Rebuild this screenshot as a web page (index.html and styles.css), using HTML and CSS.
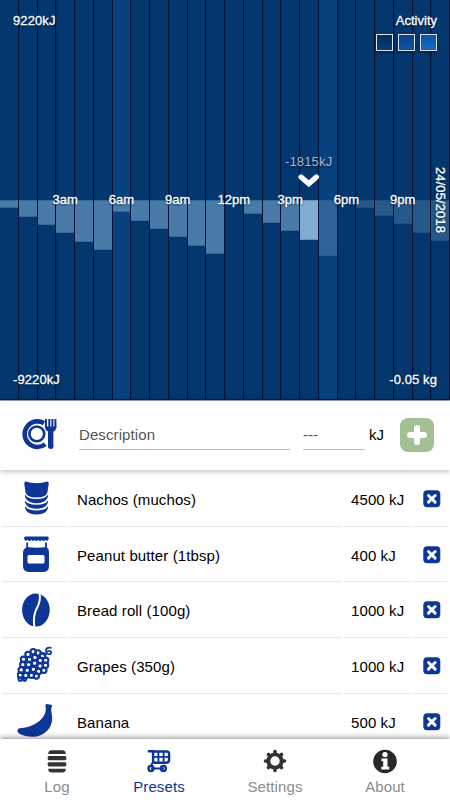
FILE: index.html
```html
<!DOCTYPE html>
<html lang="en">
<head>
<meta charset="utf-8">
<title>Energy presets</title>
<link rel="stylesheet" href="styles.css">
</head>
<body>
<svg class="defs" width="0" height="0" aria-hidden="true">
  <symbol id="remove" viewBox="0 0 18 18"><rect x=".3" y=".3" width="17" height="17" rx="4" fill="#0d3697"/><path d="M5.5 5.5l6.6 6.6M12.1 5.5l-6.6 6.6" stroke="#fff" stroke-width="2.9" stroke-linecap="round"/></symbol>
</svg>
<main class="app">
  <section class="chart">
    <div class="hours">
      <div class="hour"><i style="height:8px"></i></div>
      <div class="hour"><i style="height:17px"></i></div>
      <div class="hour"><i style="height:25px"></i></div>
      <div class="hour"><i style="height:33px"></i></div>
      <div class="hour"><i style="height:42px"></i></div>
      <div class="hour"><i style="height:50px"></i></div>
      <div class="hour active"><i style="height:12px"></i></div>
      <div class="hour"><i style="height:21px"></i></div>
      <div class="hour"><i style="height:29px"></i></div>
      <div class="hour"><i style="height:37px"></i></div>
      <div class="hour"><i style="height:46px"></i></div>
      <div class="hour"><i style="height:54px"></i></div>
      <div class="hour"></div>
      <div class="hour"><i style="height:14px"></i></div>
      <div class="hour"><i style="height:23px"></i></div>
      <div class="hour"><i style="height:31px"></i></div>
      <div class="hour now"><i style="height:40px"></i></div>
      <div class="hour active future"><i style="height:56px"></i></div>
      <div class="hour"></div>
      <div class="hour future"><i style="height:8px"></i></div>
      <div class="hour future"><i style="height:16px"></i></div>
      <div class="hour future"><i style="height:24px"></i></div>
      <div class="hour future"><i style="height:33px"></i></div>
      <div class="hour future"><i style="height:41px"></i></div>
    </div>
    <span class="label max">9220kJ</span>
    <div class="label activity"><span>Activity</span>
      <div class="levels"><b class="low"></b><b class="mid"></b><b class="high"></b></div>
    </div>
    <span class="label balance">-1815kJ</span>
    <svg class="marker" width="24" height="18" viewBox="0 0 24 18"><path d="M4 5l7.8 6.8L19.4 5" fill="none" stroke="#fff" stroke-width="5.2" stroke-linecap="round"/></svg>
    <div class="times"><span>3am</span><span>6am</span><span>9am</span><span>12pm</span><span>3pm</span><span>6pm</span><span>9pm</span></div>
    <span class="label date">24/05/2018</span>
    <span class="label min">-9220kJ</span>
    <span class="label weight">-0.05 kg</span>
  </section>

  <section class="entry">
    <svg class="plate" width="36" height="34" viewBox="0 0 36 34" fill="none" stroke="#0d3697"><path d="M23 5.2A12.8 12.8 0 1 0 24.3 26.3" stroke-width="4.6"/><circle cx="15.8" cy="15.9" r="7.4" stroke-width="2.6"/><path d="M25 1v9M28.3 1v9M31.4 1v9M34.4 1v9" stroke-width="2"/><path d="M24 8.5H35.4Q35.3 12.5 32.4 13.6V29Q32.4 31 29.8 31T27 29V13.6Q24 12.5 24 8.5z" fill="#0d3697" stroke="none"/></svg>
    <span class="field description">Description</span>
    <span class="field amount">---</span>
    <span class="unit">kJ</span>
    <button class="add" aria-label="Add"><svg width="34" height="34" viewBox="0 0 34 34"><path d="M17 10v14M10 17h14" stroke="#fff" stroke-width="6" stroke-linecap="round"/></svg></button>
  </section>

  <section class="presets">
    <div class="row">
      <div class="cell"><svg width="36" height="36" viewBox="0 0 36 36"><path d="M3.6 1.6Q14.5 4.8 25.4 1.6Q27 1.8 26.7 4L25.4 12.5Q24 17.5 14.5 17.5T3.6 12.5L2.3 4Q2 1.8 3.6 1.6z" fill="#0d3697"/><path d="M3.2 14.8Q5.4 19 14.5 19T25.8 14.8Q26.5 16.5 25 18.8Q22 23.2 14.5 23.2T4 18.8Q2.5 16.5 3.2 14.8zM3.2 20.4Q5.4 24.7 14.5 24.7T25.8 20.4Q26.5 22.1 25 24.4Q22 28.8 14.5 28.8T4 24.4Q2.5 22.1 3.2 20.4zM3.2 26.2Q5.4 30.4 14.5 30.4T25.8 26.2Q26.5 27.9 25 30.2Q22 34.5 14.5 34.5T4 30.2Q2.5 27.9 3.2 26.2z" fill="#0d3697"/></svg></div>
      <div class="cell name">Nachos (muchos)</div><div class="cell energy">4500 kJ</div><div class="cell del"><svg><use href="#remove"/></svg></div>
    </div>
    <div class="row">
      <div class="cell"><svg width="36" height="38" viewBox="0 0 36 38"><path d="M3 1.5H26Q27.2 2 26.5 4.5Q25 7 23.5 4.7Q21.8 7.2 20 4.7Q18 7.2 16.2 4.7Q14.5 7.2 12.7 4.7Q11 7.2 9.2 4.7Q7.5 7.2 5.8 4.7Q3.5 6.8 2.3 4.3Q1.5 2 3 1.5z" fill="#0d3697"/><path d="M5.2 7.5v5M24 7.5v5" stroke="#0d3697" stroke-width="1.8"/><path fill="#0d3697" fill-rule="evenodd" d="M5 12Q14.5 13.5 24.5 12Q27 13.5 27 17V31Q27 37 20.5 37H8Q1 37 1 31V17Q1.5 13.5 5 12zM7 20Q5.5 20 5.5 21.5V27Q5.5 28.5 7 28.5H21Q22.5 28.5 22.5 27V21.5Q22.5 20 21 20z"/></svg></div>
      <div class="cell name">Peanut butter (1tbsp)</div><div class="cell energy">400 kJ</div><div class="cell del"><svg><use href="#remove"/></svg></div>
    </div>
    <div class="row">
      <div class="cell"><svg width="36" height="36" viewBox="0 0 36 36"><ellipse cx="13.9" cy="18" rx="13.8" ry="16.6" fill="#0d3697"/><path d="M16.2 0Q19.8 4.5 16 14Q10.5 23 12.4 35" fill="none" stroke="#fff" stroke-width="2"/></svg></div>
      <div class="cell name">Bread roll (100g)</div><div class="cell energy">1000 kJ</div><div class="cell del"><svg><use href="#remove"/></svg></div>
    </div>
    <div class="row">
      <div class="cell wide"><svg width="38" height="38" viewBox="0 0 38 38" fill="none" stroke="#0d3697" stroke-width="2.1"><g><circle cx="11" cy="8.5" r="2.7"/><circle cx="16.2" cy="5.7" r="2.7"/><circle cx="21" cy="7" r="2.7"/><circle cx="25.6" cy="9.7" r="2.7"/><circle cx="6.5" cy="13.3" r="2.7"/><circle cx="12.5" cy="13.4" r="2.7"/><circle cx="18" cy="11.4" r="2.7"/><circle cx="23.3" cy="14.4" r="2.7"/><circle cx="28.7" cy="14.3" r="2.7"/><circle cx="5.8" cy="18.6" r="2.7"/><circle cx="11.6" cy="18.6" r="2.7"/><circle cx="17.6" cy="17.2" r="2.7"/><circle cx="23.1" cy="20" r="2.7"/><circle cx="28.5" cy="19.3" r="2.7"/><circle cx="4.2" cy="24" r="2.7"/><circle cx="10.2" cy="24.3" r="2.7"/><circle cx="16.4" cy="23.3" r="2.7"/><circle cx="21.6" cy="25.4" r="2.7"/><circle cx="26.8" cy="24.3" r="2.7"/><circle cx="3.2" cy="29.2" r="2.6"/><circle cx="8.8" cy="29.4" r="2.6"/><circle cx="14.5" cy="29.3" r="2.6"/><circle cx="19.4" cy="30" r="2.6"/><circle cx="3.3" cy="33" r="1.8"/><circle cx="7.7" cy="33.5" r="1.4"/></g><path d="M25.5 7.5Q27 10 29.8 7.5Q34.5 9.5 34 5.8Q32.5 3.8 29.3 6.3Q27.5 1 34.5 1.8" stroke-width="1.8"/></svg></div>
      <div class="cell name">Grapes (350g)</div><div class="cell energy">1000 kJ</div><div class="cell del"><svg><use href="#remove"/></svg></div>
    </div>
    <div class="row">
      <div class="cell wide"><svg width="38" height="38" viewBox="0 0 38 38"><path d="M29 2L34.5 2.8Q35.5 4 34.2 6Q34.3 10 35 14C36.5 25 28 35 15 34.8Q4 34 .8 30.2Q-.5 26.5 3 26.3C14 26 29.5 18 28.8 6Q28 3 29 2z" fill="#0d3697"/></svg></div>
      <div class="cell name">Banana</div><div class="cell energy">500 kJ</div><div class="cell del"><svg><use href="#remove"/></svg></div>
    </div>
  </section>

  <nav class="tabs">
    <a class="tab log"><svg width="26" height="26" viewBox="0 0 26 26" fill="#333"><path d="M7.5 2.2h11q3.3 0 3.3 3.8H4.2q0-3.8 3.3-3.8zM4.2 20.7h17.6q0 3.8-3.3 3.8h-11q-3.3 0-3.3-3.8z"/><rect x="3.7" y="8" width="18.6" height="4.3" rx="1.4"/><rect x="3.7" y="14.2" width="18.6" height="4.3" rx="1.4"/></svg><span>Log</span></a>
    <a class="tab selected"><svg width="26" height="26" viewBox="0 0 26 26" fill="none" stroke="#0d3697"><path d="M2.8 3.2h4.3v9.4q0 2.1 2.1 2.1h10.9q3 0 3-3V6q0-2.5-2.5-2.5H7" stroke-width="2.4" stroke-linecap="round"/><path d="M12.4 3v11M17.6 3v11M7 8.9h15M7 14L4.8 18M5 20.5h13" stroke-width="1.9"/><circle cx="5" cy="20.5" r="2.5" stroke-width="2.4"/><circle cx="17.4" cy="20.5" r="2.5" stroke-width="2.4"/></svg><span>Presets</span></a>
    <a class="tab"><svg width="26" height="26" viewBox="0 0 26 26"><g stroke="#333" stroke-width="4.6" stroke-linecap="round"><path d="M13 3.5v19M3.5 13h19M6.5 6.5l13 13M19.5 6.5l-13 13" stroke-width="3.6"/></g><circle cx="13" cy="13" r="8.6" fill="#333"/><circle cx="13" cy="13" r="4.7" fill="#fff"/></svg><span>Settings</span></a>
    <a class="tab"><svg width="26" height="26" viewBox="0 0 26 26"><circle cx="13" cy="13.5" r="11.8" fill="#282828"/><circle cx="13" cy="6.6" r="2.7" fill="#fff"/><path d="M9.5 10.5h6v8.2h1.7v2.8H9.3v-2.8h1.9v-5.4H9.5z" fill="#fff"/></svg><span>About</span></a>
  </nav>
</main>
</body>
</html>
```
FILE: styles.css
```css
* { box-sizing: border-box; }
body { margin: 0; font-family: "Liberation Sans", Arial, sans-serif; background: #fff; color: #000; }
.defs { position: absolute; }
.app { position: relative; width: 450px; height: 800px; overflow: hidden; display: flex; flex-direction: column; }
.chart { position: relative; flex: 0 0 401px; background: #04376d; border-bottom: 1px solid #9ba9c2; }
.hours { display: grid; grid-template-columns: repeat(24, 1fr); height: 400px; border-bottom: 1px solid #001c51; }
.hour { border-right: 1px solid #001239; padding-top: 200px; box-shadow: 1px 0 #032f63; }
.hour i { display: block; background: #4a7ba8; border-top: 1px solid #356899; border-bottom: 1px solid #356899; }
.active { background: #08417f; }
.future i { background: #265988; border-color: #1d5080; }
.active.future i { background: #30629b; border-color: #285b93; }
.now i { background: #80abd3; border-color: #6694bf; }
.label, .times { position: absolute; color: #fff; font-size: 13px; line-height: 16px; text-shadow: 0 1px 2px #001638; -webkit-text-stroke: .3px; white-space: nowrap; }
.max { left: 13px; top: 13px; letter-spacing: .1px; }
.activity { right: 13px; top: 13px; text-align: right; }
.levels { display: flex; justify-content: flex-end; gap: 5px; margin-top: 5px; }
.levels b { width: 17px; height: 17px; border: 1px solid #e1e5ed; box-shadow: 0 1px 2px #001638, inset 0 0 1px #001c66; }
.low { background: linear-gradient(#052c57, #06407c); }
.mid { background: linear-gradient(#0a4283, #1253a5); }
.high { background: linear-gradient(#0b57a9, #1767c8); }
.balance { left: 285px; top: 154px; color: #aab8d1; letter-spacing: .15px; -webkit-text-stroke: 0; }
.marker { position: absolute; left: 297px; top: 172px; }
.times { top: 192px; left: 37px; display: grid; grid-template-columns: repeat(7, 56.25px); text-align: center; }
.date { right: 2px; top: 167px; writing-mode: vertical-rl; letter-spacing: .1px; }
.min { left: 13px; bottom: 12px; letter-spacing: .1px; }
.weight { right: 13px; bottom: 12px; letter-spacing: .1px; }
.entry { position: relative; z-index: 1; flex: 0 0 69px; display: flex; align-items: center; padding: 0 16px 2px 21px; background: #fff; box-shadow: 0 1px 6px rgba(0,0,0,.3); font-size: 15px; }
.plate { flex: none; margin-right: 22px; }
.field { height: 30px; line-height: 30px; border-bottom: 1px solid #bdbdbd; color: #555; }
.description { width: 211px; margin-right: 13px; letter-spacing: .1px; }
.amount { width: 62px; margin-right: 4px; }
.unit { width: 31px; }
.add { width: 34px; height: 34px; padding: 0; border: 0; border-radius: 8px; background: #a4c093; margin-left: auto; }
.add svg { display: block; }
.presets { flex: 0 0 269px; overflow: hidden; padding: 1px 2px 0; }
.row { display: grid; grid-template-columns: 66px 272px 68px 33px; gap: 2px; height: 55.7px; font-size: 15px; }
.cell { display: flex; align-items: center; height: 55.7px; border-bottom: 1px solid #e7e7e7; padding-left: 20px; }
.wide { padding-left: 15px; }
.name, .energy { padding-left: 7px; padding-top: 2px; letter-spacing: .1px; }
.del { padding: 1px 0 0 9px; }
.del svg { width: 18px; height: 18px; }
.tabs { position: relative; z-index: 2; flex: 0 0 61px; display: grid; grid-template-columns: 106px 98px 134px 86px; padding: 9px 4px 0; background: #fff; box-shadow: 0 -1px 6px rgba(0,0,0,.45); }
.tab { display: flex; flex-direction: column; align-items: center; color: #8c8c8c; font-size: 15px; line-height: 17px; letter-spacing: .1px; }
.tab svg { display: block; margin-bottom: 4px; }
.selected { color: #0d3697; }
```
